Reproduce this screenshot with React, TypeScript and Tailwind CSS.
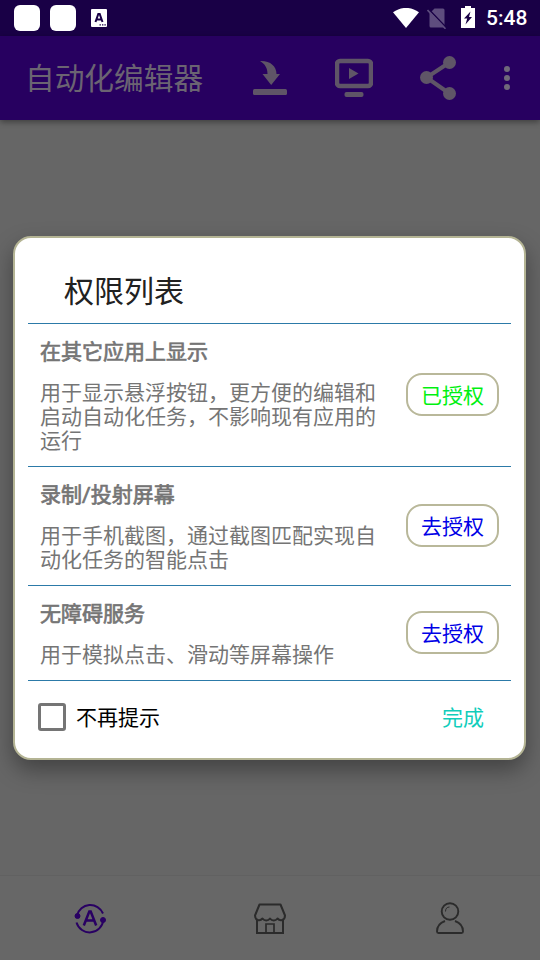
import { useState } from 'react';

interface Permission {
  title: string;
  description: string;
  granted: boolean;
}

const PERMISSIONS: Permission[] = [
  {
    title: '在其它应用上显示',
    description: '用于显示悬浮按钮，更方便的编辑和启动自动化任务，不影响现有应用的运行',
    granted: true,
  },
  {
    title: '录制/投射屏幕',
    description: '用于手机截图，通过截图匹配实现自动化任务的智能点击',
    granted: false,
  },
  {
    title: '无障碍服务',
    description: '用于模拟点击、滑动等屏幕操作',
    granted: false,
  },
];

function StatusBar() {
  return (
    <div className="h-9 flex items-center bg-[#190046] text-white">
      <div className="ml-3.5 size-[26px] rounded-md bg-white" />
      <div className="ml-2.5 size-[26px] rounded-md bg-white" />
      <svg className="ml-[15px]" width="16" height="18" viewBox="0 0 16 18">
        <rect width="16" height="18" rx="1" fill="#fff" />
        <path d="M4.500 13L7.300 5h1.400l2.800 8M5.600 10.600h4.800" fill="none" stroke="#190046" strokeWidth="2" />
        <path d="M8.500 15.800h1.400M11 15.800h1.400M13.400 15.800h1.400" stroke="#190046" strokeWidth="1.300" />
      </svg>
      <svg className="ml-auto" width="26" height="21" viewBox="0 0 26 21">
        <path d="M0 4.300C8-1.600 18-1.600 26 4.300L13 20Z" fill="#fff" />
      </svg>
      <svg className="ml-[8px]" width="20" height="21" viewBox="0 0 20 21">
        <path d="M7.500 .5H16q1.500 0 1.500 1.500v17.500H4q-1.500 0-1.500-1.500V5.500z" fill="#5e4d7e" />
        <path d="M1.500 1L20 20.300" stroke="#190046" strokeWidth="1.600" />
        <path d="M.5 2L18.500 20.800" stroke="#5e4d7e" strokeWidth="1.600" />
      </svg>
      <svg className="ml-[14px] mr-[-1px] mb-0.5" width="14" height="22" viewBox="0 0 14 22">
        <path d="M4 0h6v2h4v20H0V2h4z" fill="#fff" />
        <path d="M9.500 5.500L3 12.500h3.200L4.500 18.500l6.500-7.500H8z" fill="#190046" />
      </svg>
      <span className="ml-3 mr-[13px] w-[41px] text-[21px] leading-none font-medium whitespace-nowrap font-[Roboto,sans-serif]">
        5:48
      </span>
    </div>
  );
}

function AppBar() {
  return (
    <header className="h-[84px] flex items-center bg-[#270060] text-[#5f5567] shadow-[0_2px_6px_rgba(0,0,0,0.4)]">
      <h1 className="ml-[25px] w-[228px] pt-[2px] text-[29.700px] leading-none text-[#6b6472]">自动化编辑器</h1>
      <svg width="34" height="36" viewBox="0 0 34 36" fill="currentColor">
        <rect y="29" width="34" height="6" rx="1.500" />
        <path d="M7 1C17 .5 23.500 6 23.500 14H27L18.200 25 9.500 14h5C14.500 8 12 4 7 1z" />
      </svg>
      <svg className="ml-12" width="38" height="40" viewBox="0 0 38 40" fill="currentColor">
        <rect x="2" y="3" width="34" height="25" rx="3" fill="none" stroke="currentColor" strokeWidth="4.500" />
        <path d="M14 10v11l9.500-5.500z" />
        <rect x="9.500" y="34" width="19" height="5" rx="2" />
      </svg>
      <svg className="ml-[47px]" width="36" height="44" viewBox="0 0 36 44" fill="currentColor">
        <path d="M29.500 6.500L6.500 21.500l23 16" fill="none" stroke="currentColor" strokeWidth="4" />
        <circle cx="29.500" cy="6.500" r="6.500" />
        <circle cx="6.500" cy="21.500" r="6.500" />
        <circle cx="29.500" cy="37.500" r="6.500" />
      </svg>
      <svg className="ml-[48px]" width="6" height="24" viewBox="0 0 6 24" fill="#70697a">
        <circle cx="3" cy="3" r="3" />
        <circle cx="3" cy="12" r="3" />
        <circle cx="3" cy="21" r="3" />
      </svg>
    </header>
  );
}

function BottomNav() {
  return (
    <nav className="h-[85px] grid grid-cols-3 place-items-center border-t border-[#616161] bg-[#676767] pb-px text-[#2b2b2b]">
      <svg width="34" height="34" viewBox="0 0 34 34" fill="none" stroke="#290063" strokeWidth="2">
        <path d="M4 14.500A13.700 13.700 0 0 1 30 12.500" />
        <path d="M3.500 21.500A13.700 13.700 0 0 0 30.300 19" />
        <circle cx="4.500" cy="15" r="2.500" fill="#290063" strokeWidth="1" />
        <circle cx="30" cy="19" r="2.500" fill="#290063" strokeWidth="1" />
        <path d="M10.800 24.500L16.300 10.500h1.400l5.500 14M12.800 19.500h8.400" strokeWidth="2.500" />
      </svg>
      <svg width="34" height="34" viewBox="0 0 34 34" fill="none" stroke="currentColor" strokeWidth="2">
        <path d="M6.500 3.500h21L32 14.500c0 5-5 6-7.500 3-2 2.500-5.500 2.500-7.500 0-2 2.500-5.500 2.500-7.500 0C7 20.500 2 19.500 2 14.500z" strokeLinejoin="round" />
        <path d="M4 18v14h26V18" />
        <path d="M13 32v-9h8v9" strokeWidth="1.700" />
      </svg>
      <svg width="34" height="34" viewBox="0 0 34 34" fill="none" stroke="currentColor" strokeWidth="1.900">
        <circle cx="17" cy="10.500" r="8.300" />
        <path d="M12 20C6.500 22 4 26 4 30.500c0 1 .5 1.500 1.500 1.500h23c1 0 1.500-.5 1.500-1.500C30 26 27.500 22 22 20" />
        <path d="M12.500 10.500c0-3 1.500-4.500 4-4.500" strokeWidth="1" />
      </svg>
    </nav>
  );
}

function PermissionRow({ title, description, granted }: Permission) {
  return (
    <li className="flex items-center justify-between border-b border-[#2c7aa8] pt-4 pb-[13px] pl-3 pr-3">
      <div className="w-[340px] leading-6 text-[#757575]">
        <h3 className="mb-[17px] [-webkit-text-stroke:0.7px_#757575]">{title}</h3>
        <p>{description}</p>
      </div>
      <button
        type="button"
        className={`mb-[4px] h-[43px] w-[93px] shrink-0 rounded-[16px] border-2 border-[#b9b89a] pt-[3px] leading-none ${
          granted ? 'text-[#00f010]' : 'text-[#0000e6]'
        }`}
      >
        {granted ? '已授权' : '去授权'}
      </button>
    </li>
  );
}

function PermissionDialog() {
  const [dontRemind, setDontRemind] = useState(false);

  return (
    <section className="absolute left-[13px] top-[236px] w-[513px] h-[524px] rounded-[18px] border-2 border-[#b4b494] bg-white px-[13px] text-[21px] shadow-[0_10px_22px_rgba(0,0,0,0.35)]">
      <h2 className="flex h-[86px] items-end border-b border-[#2c7aa8] pl-9 pb-4 text-[30px] leading-none text-[#212121]">
        权限列表
      </h2>
      <ul>
        {PERMISSIONS.map((item) => (
          <PermissionRow key={item.title} {...item} />
        ))}
      </ul>
      <div className="flex h-[73px] items-center justify-between pl-2.5 pr-[27px]">
        <label className="flex items-center gap-2.5 text-black">
          <input
            type="checkbox"
            checked={dontRemind}
            onChange={(e) => setDontRemind(e.target.checked)}
            className="mb-0.5 size-7 appearance-none rounded-[3px] border-[3px] border-[#757575] checked:bg-[#03dac5]"
          />
          <span className="pt-0.5">不再提示</span>
        </label>
        <button type="button" className="pt-0.5 text-[#10cdbb]">
          完成
        </button>
      </div>
    </section>
  );
}

export default function App() {
  return (
    <div className="relative flex h-[960px] w-[540px] flex-col overflow-hidden bg-[#666666] font-[Roboto,'Noto_Sans_CJK_SC',sans-serif]">
      <StatusBar />
      <AppBar />
      <main className="flex-1" />
      <BottomNav />
      <PermissionDialog />
    </div>
  );
}
